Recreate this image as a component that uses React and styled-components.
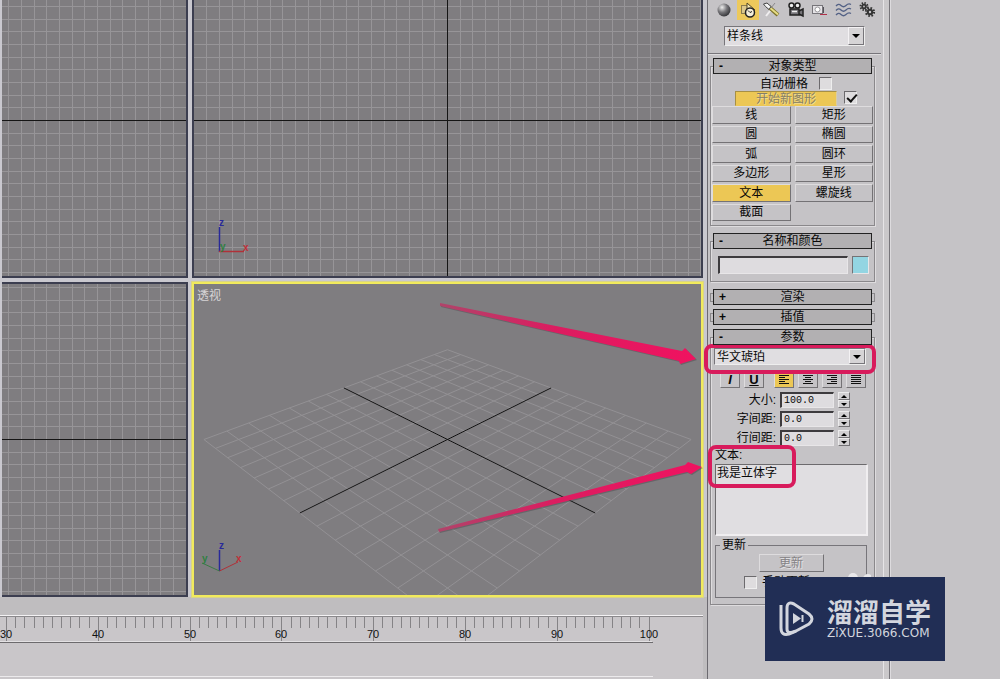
import React, { useState } from 'react';
import styled, { createGlobalStyle } from 'styled-components';

const GlobalStyle = createGlobalStyle`
  * {
    box-sizing: border-box;
  }
  body {
    margin: 0;
    background: #c5c3c6;
  }
  body, button, input, select, textarea {
    font-family: "Liberation Sans", "Noto Sans CJK SC", sans-serif;
    font-size: 12px;
    line-height: 14px;
    color: #080808;
  }
`;

// ---------- layout ----------

const Page = styled.div`
  position: relative;
  display: flex;
  min-height: 100vh;
  overflow: hidden;
  background: #c5c3c6;
`;

const Main = styled.main`
  position: relative;
  flex: 1;
  min-width: 0;
  display: flex;
  flex-direction: column;
  background: #bfbdbf;
`;

const Views = styled.div`
  flex: 1;
  display: grid;
  grid-template-columns: 186fr 511fr;
  grid-template-rows: 278fr 315fr;
  gap: 4px;
  padding: 0 4px 0 2px;
  background: #c9c8cf;
`;

const View = styled.section`
  position: relative;
  min-width: 0;
  min-height: 0;
  overflow: hidden;
  background: #7f7d80;
  border: 2px solid ${({ $active }) => ($active ? '#f1ea5c' : '#3c3e50')};
  border-top-width: ${({ $top }) => ($top ? '0' : '2px')};
  border-left-width: ${({ $left }) => ($left ? '0' : '2px')};
  box-shadow: ${({ $active }) => ($active ? '0 0 0 1px #d9d488' : 'none')};

  > svg {
    position: absolute;
    inset: 0;
    width: 100%;
    height: 100%;
  }
`;

const ViewName = styled.span`
  position: absolute;
  top: 5px;
  left: 3px;
  color: #d6d4d6;
`;

const TimeBar = styled.footer`
  height: 82px;
  padding-top: 18px;
  display: flex;
  flex-direction: column;
`;

const Track = styled.div`
  flex: 1;
  margin-right: 4px;
  border-top: 1px solid #f4f2f4;
  background: #c9c6c9;
`;

const Ruler = styled.svg`
  display: block;
  width: 100%;
  height: 63px;
`;

const Arrows = styled.svg`
  position: absolute;
  inset: 0;
  width: 100%;
  height: 100%;
  pointer-events: none;
`;

const Panel = styled.aside`
  width: 182px;
  border-left: 1px solid #6c6a70;
  box-shadow: inset -5px 0 0 #cac8ca, inset -6px 0 0 #e6e4e6;
`;

const Side = styled.div`
  width: 111px;
  border-left: 1px solid #77757a;
  box-shadow: inset 1px 0 0 #dddbde;
`;

// ---------- controls ----------

const Tools = styled.nav`
  display: flex;
  padding-left: 4px;
`;

const ToolButton = styled.button`
  width: 24px;
  height: 20px;
  padding: 0 1px;
  border: 0;
  background: ${({ $on }) => ($on ? '#edc95c' : 'transparent')};
  background-clip: content-box;

  svg {
    display: block;
    width: 22px;
    height: 20px;
  }
`;

const Combo = styled.div`
  position: relative;
  display: flex;
  height: ${({ $tall }) => ($tall ? '20px' : '17px')};
  margin: ${({ $tall }) => ($tall ? '6px 24px 0 16px' : '0 8px 0 3px')};
  border: 1px solid #77757a;
  border-right-color: #eee;
  border-bottom-color: #eee;
  background: #e0dee1;

  select {
    flex: 1;
    min-width: 0;
    padding: 0 2px;
    border: 0;
    background: transparent;
    appearance: none;
  }
`;

const ComboArrow = styled.span`
  display: grid;
  place-items: center;
  width: 16px;
  background: #d6d4d6;
  border: 1px solid #f4f2f4;
  border-right-color: #77757a;
  border-bottom-color: #77757a;
  pointer-events: none;

  &::after {
    content: '';
    border: 4px solid transparent;
    border-top-color: #000;
    border-bottom: 0;
  }
`;

const Callout = styled.div`
  position: absolute;
  inset: ${({ $inset }) => $inset};
  border: 4px solid #d81b5c;
  border-radius: 8px;
  pointer-events: none;
`;

const Rollouts = styled.div`
  margin: 7px 8px 0 0;
  padding: 4px 6px 0 2px;
  border-top: 1px solid #77757a;
  box-shadow: inset 0 1px 0 #dedcde;
`;

const RolloutBox = styled.section`
  margin-bottom: 7px;
`;

const RolloutHead = styled.button`
  position: relative;
  z-index: 1;
  display: block;
  width: calc(100% - 6px);
  height: 16px;
  margin: 0 3px;
  padding: 0;
  border: 1px solid #222;
  background: #b2b0b2;
  line-height: 14px;

  span {
    position: absolute;
    left: 5px;
    top: 0;
    font-weight: bold;
  }
`;

const RolloutBody = styled.div`
  margin-top: -8px;
  padding: 9px 0 4px;
  border: 1px solid #8a888b;
  box-shadow: inset 1px 1px 0 #dedcde, 1px 1px 0 #dedcde;
`;

const RolloutStub = styled.div`
  height: 9px;
  margin: -12px 0 0;
  border: 1px solid #8a888b;
`;

const GridCheck = styled.label`
  display: flex;
  align-items: center;
  gap: 11px;
  height: 15px;
  padding-left: 49px;
`;

const StartRow = styled.div`
  display: flex;
  gap: 7px;
  height: 15px;
  padding-left: 24px;
`;

const Check = styled.input.attrs({ type: 'checkbox' })`
  appearance: none;
  width: 13px;
  height: 13px;
  margin: 0;
  background: #dedcde;
  border: 1px solid #6c6a6d;
  border-right-color: #eee;
  border-bottom-color: #eee;

  &:checked::after {
    content: '';
    display: block;
    width: 4px;
    height: 8px;
    margin: 0 0 0 4px;
    border: solid #111;
    border-width: 0 2px 2px 0;
    transform: rotate(42deg);
  }
`;

const PushButton = styled.button`
  padding: 0;
  border: 1px solid #dedcde;
  border-right-color: #747275;
  border-bottom-color: #747275;
  background: ${({ $on }) => ($on ? '#ecc755' : '#c5c3c6')};
  line-height: 14px;

  &:disabled {
    color: #858068;
    text-shadow: 1px 1px 0 ${({ $on }) => ($on ? '#f3dc92' : '#e4e2e4')};
  }
`;

const StartButton = styled(PushButton)`
  width: 102px;
  border-color: #a68f45 #d9cda4 #ecc755 #a68f45;
`;

const UpdateButton = styled(PushButton)`
  display: block;
  width: 65px;
  height: 18px;
  margin: 0 auto;

  &:disabled {
    color: #858386;
  }
`;

const ShapeGrid = styled.div`
  display: grid;
  grid-template-columns: 1fr 1fr;
  grid-auto-rows: 1fr;
  gap: 2px 4px;
  height: 115px;
  padding: 0 1px;
`;

const NameRow = styled.div`
  display: flex;
  gap: 4px;
  padding: 5px 5px 3px 7px;
`;

const Field = styled.input`
  min-width: 0;
  padding: 0 2px;
  border: 1px solid #3d3b3e;
  border-width: 2px 1px 1px 2px;
  border-right-color: #e8e6e8;
  border-bottom-color: #e8e6e8;
  background: #dedcdf;
`;

const NameField = styled(Field)`
  flex: 1;
  height: 18px;
`;

const Swatch = styled.button`
  width: 17px;
  height: 18px;
  padding: 0;
  background: #93d5e2;
  border: 1px solid #747275;
  border-right-color: #e8e6e8;
  border-bottom-color: #e8e6e8;
`;

const ParamsBody = styled(RolloutBody)`
  padding: 10px 0 6px;
`;

const StyleBar = styled.div`
  display: flex;
  gap: 4px;
  padding: 6px 0 0 9px;
`;

const StyleButton = styled(PushButton)`
  width: 20px;
  height: 17px;
  margin-left: ${({ $gap }) => ($gap ? '6px' : '0')};
  font-size: 13px;

  svg {
    display: block;
    margin: 0 auto;
  }
`;

const NumberRows = styled.div`
  display: grid;
  gap: 3px;
  padding-top: 4px;
`;

const NumberRow = styled.div`
  display: grid;
  grid-template-columns: 65px 54px 12px;
  column-gap: 4px;
  align-items: center;

  label {
    text-align: right;
  }
  ${Field} {
    height: 16px;
    font-family: "Liberation Mono", monospace;
    font-size: 10px;
    line-height: 12px;
  }
`;

const Spinner = styled.div`
  display: grid;
  height: 16px;
`;

const SpinButton = styled.button`
  display: grid;
  place-items: center;
  padding: 0;
  background: #d2d0d2;
  border: 1px solid #ecebec;
  border-right-color: #747275;
  border-bottom-color: #747275;

  &::after {
    content: '';
    border: 3px solid transparent;
    border-${({ $up }) => ($up ? 'bottom' : 'top')}-color: #000;
    border-${({ $up }) => ($up ? 'top' : 'bottom')}-width: 0;
  }
`;

const TextBlock = styled.div`
  position: relative;
  padding: 2px 6px 0 4px;

  label {
    display: block;
    height: 16px;
  }
  textarea {
    display: block;
    width: 100%;
    height: 72px;
    padding: 1px;
    border: 1px solid #6c6a6d;
    border-right: 2px solid #f0eef0;
    border-bottom: 2px solid #f0eef0;
    border-radius: 0;
    background: #e0dee1;
    resize: none;
  }
`;

const UpdateGroup = styled.fieldset`
  margin: 2px 7px 0 4px;
  padding: 2px 0 8px;
  border: 1px solid #77757a;

  legend {
    margin-left: 4px;
    padding: 0 2px;
  }
`;

const ManualCheck = styled.label`
  display: flex;
  align-items: center;
  gap: 5px;
  padding: 3px 0 0 28px;
`;

const Watermark = styled.div`
  position: absolute;
  right: 55px;
  bottom: 18px;
  display: flex;
  align-items: center;
  gap: 12px;
  width: 180px;
  height: 84px;
  padding-left: 14px;
  background: #212e55;
  color: #d3d6de;
`;

const Bubbles = styled.svg`
  position: absolute;
  right: 74px;
  bottom: 100%;
`;

const WatermarkText = styled.div`
  strong {
    display: block;
    font-size: 26px;
    font-weight: 700;
    line-height: 28px;
  }
  span {
    display: block;
    font-family: "DejaVu Sans", sans-serif;
    font-size: 12px;
    line-height: 12px;
  }
`;

// ---------- drawings ----------

const STEP = 12.67;

const steps = (center, from, to) => {
  const out = [];
  const first = Math.ceil((from - center) / STEP);
  for (let k = first; center + k * STEP < to; k++) {
    if (k !== 0) out.push(Math.round(center + k * STEP) + 0.5);
  }
  return out;
};

const FlatGrid = ({ x, y, width, height, cx, cy, children }) => (
  <svg viewBox={`${x} ${y} ${width} ${height}`} preserveAspectRatio="xMidYMid slice">
    <g stroke="#979598">
      {steps(cx, x, x + width).map((v) => <line key={v} x1={v} x2={v} y1={y} y2={y + height} />)}
    </g>
    <g stroke="#979598">
      {steps(cy, y, y + height).map((v) => <line key={v} x1={x} x2={x + width} y1={v} y2={v} />)}
    </g>
    <g stroke="#151515">
      <line x1={x} x2={x + width} y1={cy + 0.5} y2={cy + 0.5} />
      <line x1={cx + 0.5} x2={cx + 0.5} y1={y} y2={y + height} />
    </g>
    {children}
  </svg>
);

// ground plane point (a, b), both from -7 to 7
const project = (a, b) => {
  const w = 1 - 0.02504 * (a + b);
  return [447.5 + (17.4 * (a - b)) / w, 439.5 + (8.66 * (a + b)) / w];
};

const GroundLine = ({ from, to, ...rest }) => {
  const [x1, y1] = project(...from);
  const [x2, y2] = project(...to);
  return <line x1={x1} y1={y1} x2={x2} y2={y2} {...rest} />;
};

const PerspectiveGrid = () => {
  const marks = Array.from({ length: 15 }, (_, i) => i - 7);
  return (
    <svg viewBox="194 284 507 311" preserveAspectRatio="xMidYMid slice">
      <g stroke="#939194">
        {marks.map((m) => (
          <React.Fragment key={m}>
            <GroundLine from={[m, -7]} to={[m, 7]} />
            <GroundLine from={[-7, m]} to={[7, m]} />
          </React.Fragment>
        ))}
      </g>
      <GroundLine from={[-7, 0]} to={[7, 0]} stroke="#111" />
      <GroundLine from={[0, -7]} to={[0, 7]} stroke="#111" />
      <g fontSize="10" fontWeight="bold">
        <path d="M219.5 571V550" stroke="#29299a" strokeWidth="1.5" />
        <path d="M219.5 571L238 562" stroke="#b03038" />
        <path d="M219.5 571L202 563" stroke="#3b7a45" />
        <text x="219" y="549" fill="#29299a">z</text>
        <text x="236" y="562" fill="#c03038">x</text>
        <text x="202" y="562" fill="#2f8040">y</text>
      </g>
    </svg>
  );
};

const TimeRuler = () => {
  const ticks = Array.from({ length: 71 }, (_, i) => i + 30);
  return (
    <Ruler viewBox="0 616 703 63" preserveAspectRatio="xMinYMin meet">
      <rect x="0" y="616" width="703" height="1" fill="#8b898c" />
      {ticks.map((t) => {
        const x = Math.round(6 + (t - 30) * 9.18) + 0.5;
        return <line key={t} x1={x} x2={x} y1="617" y2={t % 10 ? 628 : 642} stroke="#858386" />;
      })}
      <rect x="0" y="641" width="652" height="1" fill="#e3e1e3" />
      <rect x="0" y="642" width="653" height="1" fill="#6c6a6d" />
      <rect x="0" y="676" width="653" height="1" fill="#eceaec" />
      <g fontSize="11" textAnchor="middle" fill="#111">
        {ticks.filter((t) => t % 10 === 0).map((t) => (
          <text key={t} x={Math.round(6 + (t - 30) * 9.18)} y="638">{t}</text>
        ))}
      </g>
    </Ruler>
  );
};

const PointerArrows = () => (
  <Arrows viewBox="0 0 707 679" preserveAspectRatio="xMaxYMin meet">
    <defs>
      <linearGradient id="pink" x1="0" x2="1">
        <stop offset="0" stopColor="#b0446a" />
        <stop offset="0.45" stopColor="#dc1c60" />
        <stop offset="1" stopColor="#f01260" />
      </linearGradient>
    </defs>
    <g fill="#4c4a4d" opacity="0.45" transform="translate(1 1)">
      <path d="M440 303L682 351L685 348L696 359L680 364L679 361L440 306Z" />
      <path d="M438 529L685 465L688 462L702 467L691 474L687 472L439 532Z" />
    </g>
    <g fill="url(#pink)">
      <path d="M440 303L682 351L685 348L696 359L680 364L679 361L440 306Z" />
      <path d="M438 529L685 465L688 462L702 467L691 474L687 472L439 532Z" />
    </g>
  </Arrows>
);

const toolIcons = {
  create: (
    <>
      <defs>
        <radialGradient id="ball" cx="0.35" cy="0.3" r="0.75">
          <stop offset="0" stopColor="#eee" />
          <stop offset="0.5" stopColor="#77767a" />
          <stop offset="1" stopColor="#303034" />
        </radialGradient>
      </defs>
      <circle cx="11" cy="10" r="6.5" fill="url(#ball)" />
    </>
  ),
  shapes: (
    <g fill="none" stroke="#222">
      <rect x="4.500" y="5.500" width="8" height="8" stroke="#8b7c4e" fill="#dcc88a" />
      <path d="M10 3L18 10H10Z" fill="#f6e8b4" stroke="#504624" />
      <circle cx="13" cy="12.500" r="4.500" fill="#f5eed8" strokeWidth="1.500" />
      <path d="M11 10.500L13 12.500L15 11.500" />
    </g>
  ),
  lights: (
    <g fill="none">
      <path d="M8 7L17 15" stroke="#7c7228" strokeWidth="4" />
      <path d="M8 7L17 14.500" stroke="#e7dd86" strokeWidth="2" />
      <path d="M2.500 4L6 3L10 6.500L8 9.500L4.500 6.500Z" fill="#f4f4f4" stroke="#444" />
      <path d="M14 3L10 8" stroke="#8a888b" />
      <path d="M5 16L9 11" stroke="#f0eef0" strokeWidth="2" />
    </g>
  ),
  cameras: (
    <g fill="#eee" stroke="#222" strokeWidth="1.500">
      <circle cx="6.500" cy="5.500" r="2.500" />
      <circle cx="12.500" cy="5.500" r="2.500" />
      <path d="M5 9H14V15H5ZM14 11L18 9V16L14 14" fill="#77757a" />
      <path d="M7 11.500H12" stroke="#eee" />
    </g>
  ),
  helpers: (
    <g fill="none">
      <rect x="3.500" y="5.500" width="10" height="8" fill="#e5e3e6" stroke="#77757a" />
      <circle cx="8.500" cy="9.500" r="2.500" fill="#fff" stroke="#98969a" />
      <path d="M11 14.500H18" stroke="#b03048" />
      <path d="M14.500 7V13" stroke="#55535a" />
    </g>
  ),
  warps: (
    <g fill="none" stroke="#536185" strokeWidth="1.300">
      <path d="M3 6Q5.500 3 8 5.500T13 5.500T18 4.500" />
      <path d="M3 10.500Q5.500 7.500 8 10T13 10T18 9" />
      <path d="M3 15Q5.500 12 8 14.500T13 14.500T18 13.500" />
    </g>
  ),
  systems: (
    <g fill="none" stroke="#333">
      <circle cx="7" cy="6.500" r="3.500" strokeWidth="2" strokeDasharray="1.400 1.350" />
      <circle cx="7" cy="6.500" r="1.800" strokeWidth="1.800" />
      <circle cx="13" cy="12" r="4" strokeWidth="2.200" strokeDasharray="1.600 1.540" />
      <circle cx="13" cy="12" r="2.200" strokeWidth="2" />
    </g>
  ),
};

const toolNames = {
  create: '几何体',
  shapes: '图形',
  lights: '灯光',
  cameras: '摄影机',
  helpers: '辅助对象',
  warps: '空间扭曲',
  systems: '系统',
};

const alignLines = {
  left: ['2 12', '2 8', '2 12', '2 8', '2 12'],
  center: ['2 12', '4 10', '2 12', '4 10', '2 12'],
  right: ['2 12', '6 12', '2 12', '6 12', '2 12'],
  justify: ['2 12', '2 12', '2 12', '2 12', '2 12'],
};

const AlignIcon = ({ kind }) => (
  <svg width="14" height="13">
    {alignLines[kind].map((line, i) => {
      const [x1, x2] = line.split(' ');
      return <line key={i} x1={x1} x2={x2} y1={2.5 + i * 2} y2={2.5 + i * 2} stroke="#111" />;
    })}
  </svg>
);

const Rollout = ({ title, open, children }) => (
  <RolloutBox>
    <RolloutHead type="button" aria-expanded={!!open}>
      <span>{open ? '-' : '+'}</span>
      {title}
    </RolloutHead>
    {open ? children : <RolloutStub />}
  </RolloutBox>
);

const shapes = ['线', '矩形', '圆', '椭圆', '弧', '圆环', '多边形', '星形', '文本', '螺旋线', '截面'];

const numbers = [
  { id: 'size', label: '大小:', value: '100.0' },
  { id: 'kerning', label: '字间距:', value: '0.0' },
  { id: 'leading', label: '行间距:', value: '0.0' },
];

const CommandPanel = () => {
  const [shape, setShape] = useState('文本');
  const [align, setAlign] = useState('left');

  return (
    <Panel>
      <Tools>
        {Object.keys(toolIcons).map((key) => (
          <ToolButton key={key} type="button" aria-label={toolNames[key]} $on={key === 'shapes'}>
            <svg viewBox="0 0 22 20">{toolIcons[key]}</svg>
          </ToolButton>
        ))}
      </Tools>
      <Combo $tall>
        <select aria-label="图形类别">
          <option>样条线</option>
        </select>
        <ComboArrow />
      </Combo>

      <Rollouts>
        <Rollout title="对象类型" open>
          <RolloutBody>
            <GridCheck>
              自动栅格
              <Check />
            </GridCheck>
            <StartRow>
              <StartButton type="button" $on disabled>开始新图形</StartButton>
              <Check defaultChecked aria-label="开始新图形" />
            </StartRow>
            <ShapeGrid>
              {shapes.map((name) => (
                <PushButton key={name} type="button" $on={name === shape} onClick={() => setShape(name)}>
                  {name}
                </PushButton>
              ))}
            </ShapeGrid>
          </RolloutBody>
        </Rollout>

        <Rollout title="名称和颜色" open>
          <RolloutBody>
            <NameRow>
              <NameField aria-label="名称" />
              <Swatch type="button" aria-label="颜色" />
            </NameRow>
          </RolloutBody>
        </Rollout>

        <Rollout title="渲染" />
        <Rollout title="插值" />

        <Rollout title="参数" open>
          <ParamsBody>
            <Combo>
              <select aria-label="字体">
                <option>华文琥珀</option>
              </select>
              <ComboArrow />
              <Callout $inset="-5px -11px -10px -11px" />
            </Combo>
            <StyleBar>
              <StyleButton type="button"><b><i>I</i></b></StyleButton>
              <StyleButton type="button"><b><u>U</u></b></StyleButton>
              {Object.keys(alignLines).map((kind) => (
                <StyleButton
                  key={kind}
                  type="button"
                  aria-label={kind}
                  $gap={kind === 'left'}
                  $on={kind === align}
                  onClick={() => setAlign(kind)}
                >
                  <AlignIcon kind={kind} />
                </StyleButton>
              ))}
            </StyleBar>
            <NumberRows>
              {numbers.map((n) => (
                <NumberRow key={n.id}>
                  <label htmlFor={n.id}>{n.label}</label>
                  <Field id={n.id} defaultValue={n.value} />
                  <Spinner>
                    <SpinButton type="button" aria-label="增加" $up />
                    <SpinButton type="button" aria-label="减少" />
                  </Spinner>
                </NumberRow>
              ))}
            </NumberRows>
            <TextBlock>
              <label htmlFor="text">文本:</label>
              <textarea id="text" defaultValue="我是立体字" />
              <Callout $inset="-1px 78px 48px -3px" />
            </TextBlock>
            <UpdateGroup>
              <legend>更新</legend>
              <UpdateButton type="button" disabled>更新</UpdateButton>
              <ManualCheck>
                <Check />
                手动更新
              </ManualCheck>
            </UpdateGroup>
          </ParamsBody>
        </Rollout>
      </Rollouts>
    </Panel>
  );
};

const App = () => (
  <>
    <GlobalStyle />
    <Page>
      <Main>
        <Views>
          <View $top $left>
            <FlatGrid x={2} y={0} width={184} height={276} cx={-55} cy={120} />
          </View>
          <View $top>
            <FlatGrid x={194} y={0} width={507} height={276} cx={447} cy={120}>
              <g fontSize="10" fontWeight="bold">
                <path d="M219.5 252V227" stroke="#29299a" strokeWidth="1.5" />
                <path d="M219 251.5H244" stroke="#b03038" strokeWidth="1.5" />
                <text x="219" y="226" fill="#29299a">z</text>
                <text x="243" y="251" fill="#c03038">x</text>
                <text x="220" y="250" fill="#2f8040">y</text>
              </g>
            </FlatGrid>
          </View>
          <View $left>
            <FlatGrid x={2} y={284} width={184} height={311} cx={-55} cy={439} />
          </View>
          <View $active>
            <PerspectiveGrid />
            <ViewName>透视</ViewName>
          </View>
        </Views>
        <TimeBar>
          <Track>
            <TimeRuler />
          </Track>
        </TimeBar>
        <PointerArrows />
      </Main>
      <CommandPanel />
      <Side />
      <Watermark>
        <Bubbles width="28" height="4" fill="#e9e8ea">
          <circle cx="10" cy="5" r="5" />
          <circle cx="25" cy="6" r="5" />
        </Bubbles>
        <svg width="36" height="36" viewBox="0 0 36 36" fill="none" stroke="#d3d6de" strokeWidth="3">
          <path d="M2 4V27Q2 35 10 33L17 30" />
          <path d="M8 28V7Q8 0 15 3L30 13Q36 18 30 23L17 30Q8 34 8 28Z" />
          <path d="M14 12L22 17.500L14 23Z" fill="#d3d6de" stroke="none" />
          <path d="M23.500 14V21" strokeWidth="2" />
        </svg>
        <WatermarkText>
          <strong>溜溜自学</strong>
          <span>ZiXUE.3066.COM</span>
        </WatermarkText>
      </Watermark>
    </Page>
  </>
);

export default App;
